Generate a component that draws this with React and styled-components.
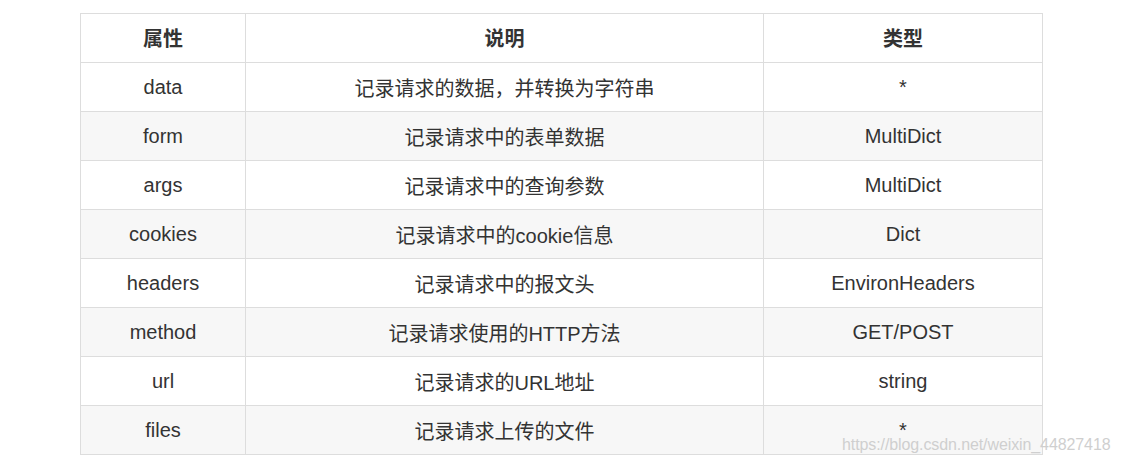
import styled, { createGlobalStyle } from 'styled-components';

const GlobalStyle = createGlobalStyle`
  html, body {
    margin: 0;
    padding: 0;
    background: #fff;
  }
  body {
    font-family: "Liberation Sans", Arial, "Noto Sans CJK SC", sans-serif;
  }
`;

const Page = styled.div`
  position: relative;
  width: 1123px;
  height: 466px;
  padding: 13px 0 0 80px;
  box-sizing: border-box;
  overflow: hidden;
`;

const Table = styled.table`
  width: 962px;
  border-collapse: collapse;
  table-layout: fixed;
  font-size: 20px;
  color: #333;
`;

const Row = styled.tr`
  background: ${(p) => (p.$striped ? '#f7f7f7' : '#fff')};
`;

const HeadCell = styled.th`
  height: 46px;
  padding: 0 8px 2px;
  border: 1px solid #ddd;
  font-weight: bold;
  text-align: center;
  color: #333;
`;

const Cell = styled.td`
  height: 48px;
  padding: 0 8px;
  border: 1px solid #ddd;
  text-align: center;
`;

const Watermark = styled.div`
  position: absolute;
  left: 842px;
  top: 436px;
  font-size: 16px;
  letter-spacing: -0.1px;
  color: #cfcfcf;
  white-space: nowrap;
  font-family: "Liberation Sans", Arial, sans-serif;
`;

const rows = [
  ['data', '记录请求的数据，并转换为字符串', '*'],
  ['form', '记录请求中的表单数据', 'MultiDict'],
  ['args', '记录请求中的查询参数', 'MultiDict'],
  ['cookies', '记录请求中的cookie信息', 'Dict'],
  ['headers', '记录请求中的报文头', 'EnvironHeaders'],
  ['method', '记录请求使用的HTTP方法', 'GET/POST'],
  ['url', '记录请求的URL地址', 'string'],
  ['files', '记录请求上传的文件', '*'],
];

export default function App() {
  return (
    <Page>
      <GlobalStyle />
      <Table>
        <colgroup>
          <col style={{ width: 165 }} />
          <col style={{ width: 518 }} />
          <col style={{ width: 279 }} />
        </colgroup>
        <thead>
          <Row>
            <HeadCell>属性</HeadCell>
            <HeadCell>说明</HeadCell>
            <HeadCell>类型</HeadCell>
          </Row>
        </thead>
        <tbody>
          {rows.map((r, i) => (
            <Row key={r[0]} $striped={i % 2 === 1}>
              <Cell>{r[0]}</Cell>
              <Cell>{r[1]}</Cell>
              <Cell>{r[2]}</Cell>
            </Row>
          ))}
        </tbody>
      </Table>
      <Watermark>https://blog.csdn.net/weixin_44827418</Watermark>
    </Page>
  );
}
